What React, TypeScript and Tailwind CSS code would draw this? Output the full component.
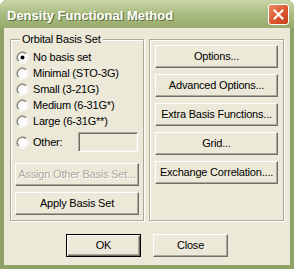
import React from 'react';

const options = ['No basis set', 'Minimal (STO-3G)', 'Small (3-21G)', 'Medium (6-31G*)', 'Large (6-31G**)'];
const rightButtons = ['Options...', 'Advanced Options...', 'Extra Basis Functions...', 'Grid...', 'Exchange Correlation....'];

function Radio({ checked = false }: { checked?: boolean }) {
  return (
    <svg width="13" height="13" viewBox="0 0 13 13" className="shrink-0">
      <circle cx="6.5" cy="6.5" r="5" fill="#fff" />
      <path d="M2.26 10.74 A6 6 0 0 1 10.74 2.26" stroke="#aca899" fill="none" />
      <path d="M10.74 2.26 A6 6 0 0 1 2.26 10.74" stroke="#fff" fill="none" />
      <path d="M2.96 10.04 A5 5 0 0 1 10.04 2.96" stroke="#716f64" fill="none" />
      <path d="M10.04 2.96 A5 5 0 0 1 2.96 10.04" stroke="#f1efe2" fill="none" />
      {checked && <circle cx="6.5" cy="6.5" r="2" fill="#000" />}
    </svg>
  );
}

function Btn({ label, disabled = false, className = '' }: { label: string; disabled?: boolean; className?: string }) {
  return (
    <div
      className={`flex h-[23px] items-center justify-center border border-t-white border-l-white border-b-[#716f64] border-r-[#716f64] bg-[#ece9d8] shadow-[inset_-1px_-1px_0_#aca899] ${
        disabled ? 'text-[#aca899] [text-shadow:1px_1px_0_#fff]' : 'text-black'
      } ${className}`}
    >
      {label}
    </div>
  );
}

function Group({ children, title, className = '' }: { children: React.ReactNode; title?: string; className?: string }) {
  return (
    <div className={`flex flex-col border border-[#aca899] shadow-[inset_1px_1px_0_#fff,1px_1px_0_#fff] ${className}`}>
      {title && <span className="-mt-[7px] ml-[5px] h-[13px] w-fit bg-[#ece9d8] px-[2px] leading-[13px]">{title}</span>}
      {children}
    </div>
  );
}

export default function App() {
  return (
    <div className="flex h-[269px] w-[294px] flex-col overflow-hidden rounded-t-[7px] bg-[#8fa266] font-['Liberation_Sans',Arial,sans-serif] text-[11px] tracking-[-0.2px] text-black">
      {/* Title bar */}
      <div className="flex h-[28px] shrink-0 items-center justify-between bg-gradient-to-b from-[#c9d6a8] via-[#a9bb80] to-[#97ab6c] pl-[7px] pr-[5px]">
        <span className="pt-[3px] text-[13px] font-bold tracking-normal text-white [text-shadow:1px_1px_0_#5c6d3a]">
          Density Functional Method
        </span>
        <div className="flex h-[21px] w-[21px] items-center justify-center rounded-[3px] border border-white bg-gradient-to-br from-[#ec8a63] via-[#dc5a32] to-[#c0401c]">
          <svg width="11" height="11" viewBox="0 0 11 11">
            <path d="M1.5 1.5 L9.5 9.5 M9.5 1.5 L1.5 9.5" stroke="#fff" strokeWidth="2" strokeLinecap="square" />
          </svg>
        </div>
      </div>

      {/* Body */}
      <div className="mx-[4px] mb-[4px] flex flex-1 flex-col bg-[#ece9d8]">
        <div className="mt-[11px] flex h-[182px] gap-[5px] px-[6px]">
          <Group title="Orbital Basis Set" className="w-[134px] px-[4px]">
            <div className="mt-[3px] flex flex-col pl-[1px]">
              {options.map((o, i) => (
                <div key={o} className="flex h-[16px] items-center gap-[4px]">
                  <Radio checked={i === 0} />
                  <span>{o}</span>
                </div>
              ))}
            </div>
            <div className="mt-[3px] flex h-[20px] items-center pl-[1px]">
              <Radio />
              <span className="ml-[4px] w-[45px]">Other:</span>
              <div className="h-[20px] w-[60px] border border-t-[#aca899] border-l-[#aca899] border-b-white border-r-white bg-[#ece9d8] shadow-[inset_1px_1px_0_#716f64,inset_-1px_-1px_0_#f1efe2]" />
            </div>
            <Btn label="Assign Other Basis Set..." disabled className="mt-[11px]" />
            <Btn label="Apply Basis Set" className="mt-[6px]" />
          </Group>
          <Group className="w-[135px] gap-[6px] px-[5px] pt-[5px]">
            {rightButtons.map((b) => (
              <Btn key={b} label={b} />
            ))}
          </Group>
        </div>

        <div className="mt-[13px] flex justify-center gap-[12px]">
          <div className="flex h-[23px] w-[75px] items-center justify-center border border-black bg-[#ece9d8] shadow-[inset_1px_1px_0_#fff,inset_-1px_-1px_0_#716f64,inset_-2px_-2px_0_#aca899]">
            OK
          </div>
          <Btn label="Close" className="w-[75px]" />
        </div>
      </div>
    </div>
  );
}
